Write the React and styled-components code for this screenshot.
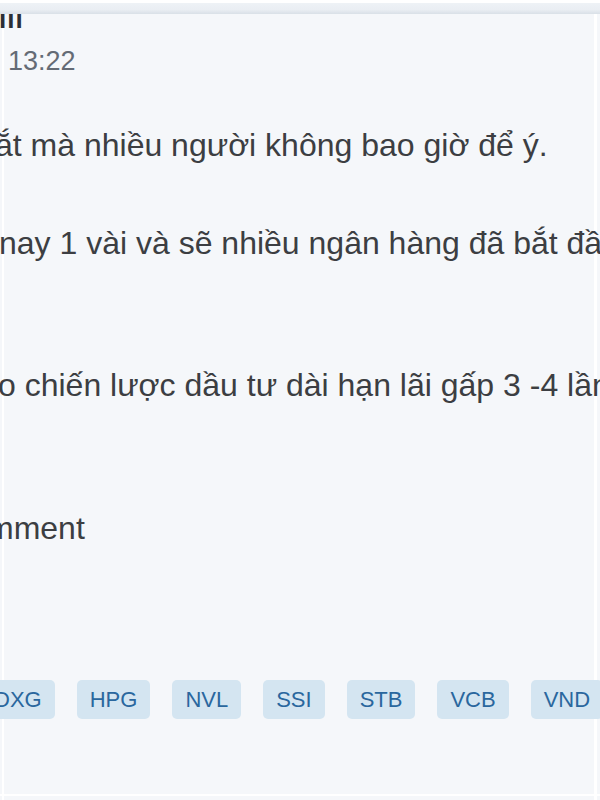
import React from "react";
import styled, { createGlobalStyle } from "styled-components";

const Global = createGlobalStyle`
  html, body { margin: 0; padding: 0; background: #f5f7fa; }
  body { font-family: "Liberation Sans", Arial, sans-serif; overflow: hidden; }
`;

const Frame = styled.div`
  width: 600px;
  height: 800px;
  overflow: hidden;
  box-sizing: border-box;
  border-top: 3px solid #ffffff;
  background:
    linear-gradient(to right, transparent 2px, #ffffff 2px, #ffffff 4px, transparent 4px),
    linear-gradient(to left, transparent 3px, #ffffff 3px, #ffffff 6px, transparent 6px),
    linear-gradient(to top, transparent 4px, #ffffff 4px, #ffffff 6px, transparent 6px),
    #f5f7fa;
`;

const TopBar = styled.div`
  height: 11px;
  background: linear-gradient(to bottom, #eef2f6 0, #eaeef3 60%, #d9e0e7 100%);
`;

const Name = styled.div`
  font-size: 26px;
  font-weight: 700;
  line-height: 10px;
  height: 10px;
  color: #2b2f36;
  letter-spacing: 1px;
  text-indent: -1px;
`;

const Time = styled.div`
  margin-top: 22px;
  font-size: 27px;
  line-height: 30px;
  color: #646b75;
  padding-left: 8px;
`;

const Body = styled.div`
  margin-top: 45px;
  color: #3c3e42;
  font-size: 32px;
  line-height: 48px;
`;

const Line = styled.p`
  margin: ${(p) => p.$gap}px 0 0 0;
  white-space: nowrap;
  text-indent: ${(p) => p.$indent}px;
`;

const Tags = styled.div`
  display: flex;
  gap: 22px;
  margin-top: 128px;
  margin-left: -19px;
`;

const Tag = styled.span`
  flex: none;
  height: 39px;
  line-height: 39px;
  padding: 0 13px;
  border-radius: 5px;
  background: #d4e5f1;
  color: #2a679e;
  font-size: 22px;
  white-space: nowrap;
`;

export default function App() {
  const tags = ["DXG", "HPG", "NVL", "SSI", "STB", "VCB", "VND"];
  return (
    <>
      <Global />
      <Frame>
        <TopBar />
        <Name>ııı</Name>
        <Time>13:22</Time>
        <Body>
          <Line $gap={0} $indent={-5}>ắt mà nhiều người không bao giờ để ý.</Line>
          <Line $gap={50} $indent={-1}>nay 1 vài và sẽ nhiều ngân hàng đã bắt đầu</Line>
          <Line $gap={94} $indent={-2}>o chiến lược dầu tư dài hạn lãi gấp 3 -4 lần</Line>
          <Line $gap={95} $indent={-13}>mment</Line>
        </Body>
        <Tags>
          {tags.map((t) => (
            <Tag key={t}>{t}</Tag>
          ))}
        </Tags>
      </Frame>
    </>
  );
}
